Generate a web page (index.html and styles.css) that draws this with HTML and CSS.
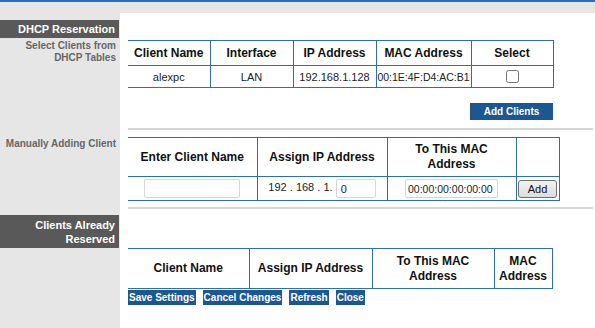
FILE: index.html
```html
<!DOCTYPE html>
<html lang="en">
<head>
  <meta charset="UTF-8" />
  <title>DHCP Reservation</title>
  <link rel="stylesheet" href="styles.css">
</head>
<body>
  <div class="topline"></div>
  <div class="topband"></div>

  <div class="page">
    <!-- Select from DHCP table -->
    <div class="section">
      <div class="side">
        <div class="side-head">DHCP Reservation</div>
        <div class="side-note">Select Clients from<br>DHCP Tables</div>
      </div>
      <div class="main">
        <table class="grid t1">
          <colgroup>
            <col class="w82"><col class="w83"><col class="w83"><col class="w95"><col class="w82">
          </colgroup>
          <tr class="head-row">
            <th>Client Name</th><th>Interface</th><th>IP Address</th><th>MAC Address</th><th>Select</th>
          </tr>
          <tr class="data-row">
            <td>alexpc</td><td>LAN</td><td>192.168.1.128</td><td class="mac">00:1E:4F:D4:AC:B1</td>
            <td><input type="checkbox" class="check"></td>
          </tr>
        </table>
        <div class="btn-right">
          <button class="blue-btn add-clients">Add Clients</button>
        </div>
        <div class="sep"></div>
      </div>
    </div>

    <!-- Manual add -->
    <div class="section">
      <div class="side">
        <div class="side-note manual">Manually Adding Client</div>
      </div>
      <div class="main">
        <table class="grid t2">
          <colgroup>
            <col class="w129"><col class="w130"><col class="w129"><col class="w43">
          </colgroup>
          <tr class="head-row">
            <th>Enter Client Name</th><th>Assign IP Address</th><th>To This MAC<br>Address</th><th></th>
          </tr>
          <tr class="data-row">
            <td><input type="text" class="field name-field"></td>
            <td class="ip">192 . 168 . 1. <input type="text" class="field ip-field" value="0"></td>
            <td><input type="text" class="field mac-field" value="00:00:00:00:00:00"></td>
            <td><button class="add-btn">Add</button></td>
          </tr>
        </table>
        <div class="sep"></div>
      </div>
    </div>

    <!-- Already reserved -->
    <div class="section last">
      <div class="side">
        <div class="side-head tall">Clients Already<br>Reserved</div>
      </div>
      <div class="main">
        <table class="grid t3">
          <colgroup>
            <col class="w121"><col class="w123"><col class="w122"><col class="w58">
          </colgroup>
          <tr class="head-row">
            <th>Client Name</th><th>Assign IP Address</th><th>To This MAC<br>Address</th><th>MAC<br>Address</th>
          </tr>
        </table>
        <div class="actions">
          <button class="blue-btn">Save Settings</button>
          <button class="blue-btn">Cancel Changes</button>
          <button class="blue-btn">Refresh</button>
          <button class="blue-btn">Close</button>
        </div>
      </div>
    </div>
  </div>
</body>
</html>
```

FILE: styles.css
```css
body {
  margin: 0;
  font-family: "Liberation Sans", Arial, sans-serif;
  background: #fff;
}
.topline {
  height: 2px;
  background: #2c6db3;
}
.topband {
  height: 11px;
  background: #e6e6e6;
}
.page {
  display: flex;
  flex-direction: column;
  min-height: 315px;
  background: linear-gradient(to right, #e6e6e6 120px, #fff 120px);
}
.section {
  display: grid;
  grid-template-columns: 120px 1fr;
}
.section.last {
  flex: 1;
}
.side-head {
  margin-top: 7px;
  margin-right: 1px;
  height: 18px;
  line-height: 18px;
  background: #595959;
  color: #fff;
  font-size: 11px;
  font-weight: bold;
  text-align: right;
  padding-right: 4px;
}
.side-head.tall {
  margin-top: 6px;
  height: 33px;
  line-height: 14px;
  padding-top: 3px;
  box-sizing: border-box;
}
.side-note {
  margin-top: 2px;
  font-size: 10px;
  line-height: 12px;
  font-weight: bold;
  color: #666;
  text-align: right;
  padding-right: 4px;
}
.side-note.manual {
  margin-top: 8px;
}
.main {
  padding-left: 8px;
  padding-right: 2px;
}

/* tables */
.grid {
  border-collapse: collapse;
  table-layout: fixed;
}
.grid th,
.grid td {
  border-top: 1px solid #2c6db3;
  border-right: 1px solid #2c6db3;
  border-bottom: 1px solid #2c6db3;
  padding: 0;
  text-align: center;
}
.grid th {
  font-size: 12px;
  font-weight: bold;
  color: #111;
  line-height: 15px;
}
.grid td {
  font-size: 11px;
  color: #222;
}
.w82 { width: 82px; }
.w83 { width: 83px; }
.w95 { width: 95px; }
.w129 { width: 129px; }
.w130 { width: 130px; }
.w43 { width: 43px; }
.w121 { width: 121px; }
.w123 { width: 123px; }
.w122 { width: 122px; }
.w58 { width: 58px; }

.t1 { margin-top: 27px; }
.t1 .head-row { height: 25px; }
.t1 .data-row { height: 22px; }
.t1 .mac { font-size: 10.5px; white-space: nowrap; }
.check {
  margin: 0;
  width: 13px;
  height: 13px;
  vertical-align: middle;
}

.t2 { margin-top: 7px; }
.t2 .head-row { height: 39px; }
.t2 .data-row { height: 24px; }
.t3 { margin-top: 39px; }
.t3 .head-row { height: 40px; }

.field {
  box-sizing: border-box;
  height: 19px;
  border: 1px solid #d6d6d6;
  border-radius: 2px;
  font-family: "Liberation Sans", Arial, sans-serif;
  font-size: 11px;
  padding: 0 4px;
  vertical-align: middle;
  color: #222;
}
.name-field { width: 96px; }
.ip-field { width: 40px; }
.mac-field { width: 93px; padding: 0 2px; font-size: 10.5px; }
.ip { white-space: nowrap; }
.add-btn {
  width: 39px;
  height: 18px;
  padding: 0;
  font-family: "Liberation Sans", Arial, sans-serif;
  font-size: 11px;
  color: #111;
  border: 1px solid #707070;
  border-radius: 3px;
  background: linear-gradient(#f2f2f2, #dddddd);
  vertical-align: middle;
}

/* buttons */
.blue-btn {
  background: #1c5792;
  color: #fff;
  border: none;
  font-family: "Liberation Sans", Arial, sans-serif;
  font-size: 10px;
  font-weight: bold;
  padding: 0 1px;
  height: 15px;
  cursor: pointer;
}
.btn-right {
  display: flex;
  justify-content: flex-end;
  width: 425px;
  margin-top: 15px;
}
.add-clients {
  width: 83px;
  height: 17px;
}
.sep {
  margin-top: 8px;
  height: 2px;
  background: #d6d6d6;
}
.t2 + .sep { margin-top: 6px; }
.actions {
  display: flex;
  gap: 7px;
  margin-top: 1px;
}
```
